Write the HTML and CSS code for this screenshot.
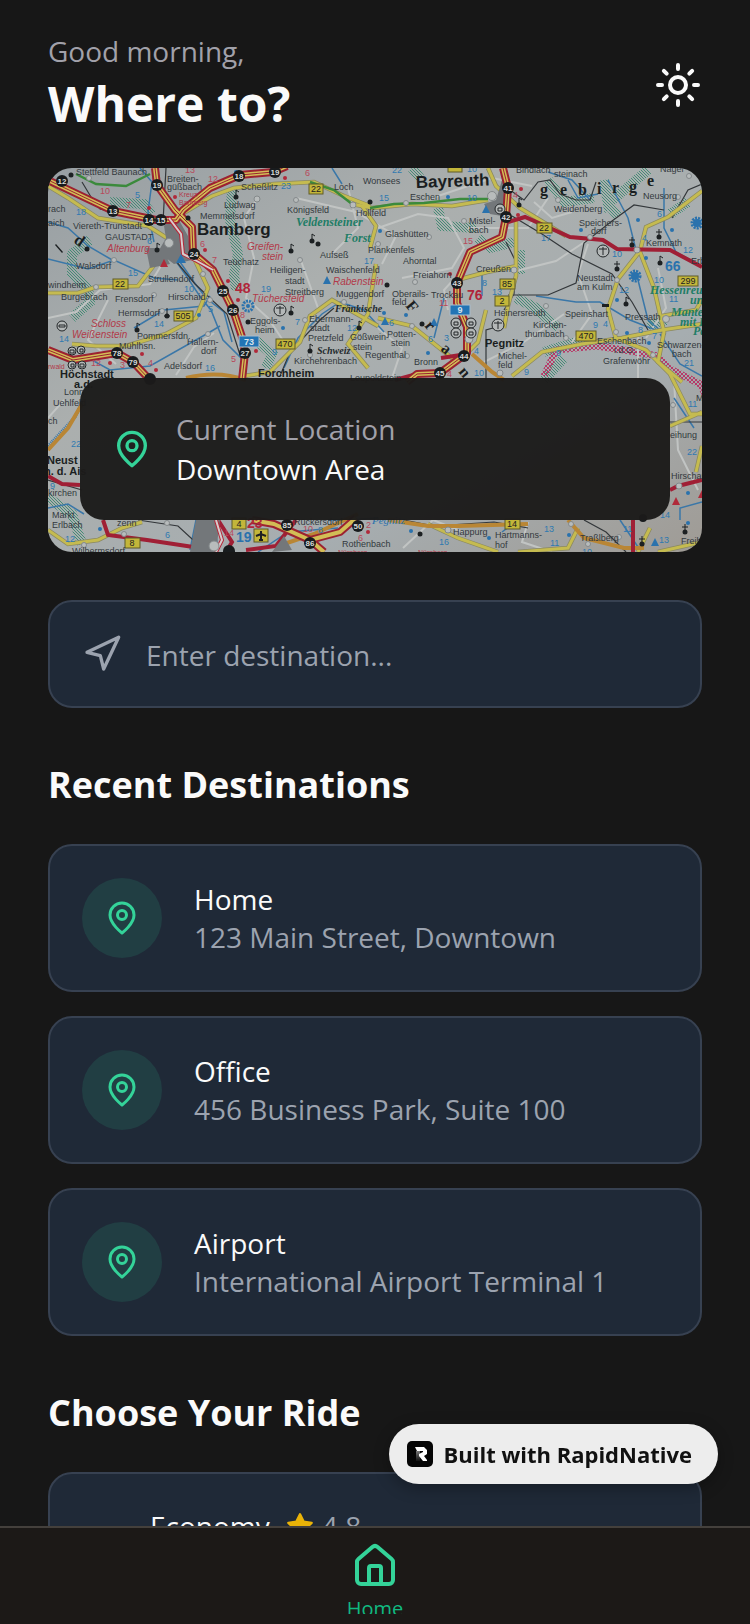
FILE: index.html
```html
<!DOCTYPE html>
<html lang="en">
<head>
    <meta charset="UTF-8">
    <meta name="viewport" content="width=device-width, initial-scale=1.0">
    <title>Where to?</title>
    <link rel="stylesheet" href="styles.css">
</head>
<body>
    <!-- shared icons -->
    <svg class="sprite" aria-hidden="true">
        <symbol id="pin" viewBox="0 0 24 24">
            <path d="M20 10c0 6-8 12-8 12s-8-6-8-12a8 8 0 0 1 16 0Z"/>
            <circle cx="12" cy="10" r="3"/>
        </symbol>
    </svg>

    <main class="screen">
        <header class="header">
            <div>
                <p class="greeting">Good morning,</p>
                <h1>Where to?</h1>
            </div>
            <button class="theme-btn" type="button" aria-label="Toggle theme">
                <svg class="icon icon-lg" viewBox="0 0 24 24">
                    <circle cx="12" cy="12" r="4"/>
                    <path d="M12 2v2M12 20v2M4.93 4.93l1.41 1.41M17.66 17.66l1.41 1.41M2 12h2M20 12h2M6.34 17.66l-1.41 1.41M19.07 4.93l-1.41 1.41"/>
                </svg>
            </button>
        </header>

        <section class="map">
            <svg class="map-art" viewBox="0 0 654 384" preserveAspectRatio="xMidYMid slice" aria-hidden="true">
                <defs>
                    <linearGradient id="paper" x1="0" y1="0" x2="1" y2="1">
                        <stop offset="0" stop-color="#989fa3"/>
                        <stop offset="0.35" stop-color="#abafae"/>
                        <stop offset="0.7" stop-color="#a6adb0"/>
                        <stop offset="1" stop-color="#9f9b95"/>
                    </linearGradient>
                    <pattern id="hatch" width="3" height="3" patternUnits="userSpaceOnUse">
                        <path d="M0 0l3 3" stroke="#448c75" stroke-width="1"/>
                    </pattern>
                    <pattern id="dots" width="4" height="4" patternUnits="userSpaceOnUse">
                        <path d="M0 0l4 4M4 0l-4 4" stroke="#b63a68" stroke-width="1"/>
                    </pattern>
                </defs>
                <rect width="654" height="384" fill="url(#paper)"/>

                <!-- forest edges -->
                <g fill="none" stroke="url(#hatch)" stroke-width="10">
                    <path d="M62 34l34 2 8 10"/>
                    <path d="M184 22l-2 30 8 34-4 20 2 16"/>
                    <path d="M42 72l-18 14v20l16 14 2 14-18 16"/>
                    <path d="M208 172l16 14-6 14"/>
                    <path d="M364 0l8 10M390 40l4 18 34 2"/>
                    <path d="M430 70l12 10 24-6M472 82v24"/>
                    <path d="M468 130l20 10 22 20"/>
                    <path d="M500 12l16 22 30-4M556 12l4 24 40-34M560 36l10 12"/>
                    <path d="M496 184l50-16M640 34l-18 12M600 158l18-6"/>
                    <path d="M516 190l-20 22"/>
                    <path d="M0 330l24 16 10 30"/>
                </g>
                <g fill="none" stroke="url(#dots)" stroke-width="7">
                    <path d="M496 208l12-26 40-4 28 4 34 6 10 12 32 16 6 12"/>
                </g>

                <!-- lanes -->
                <g fill="none" stroke="#c1c4c3" stroke-width="2">
                    <path d="M0 150l28-6 24-22 50-6 18-30"/>
                    <path d="M210 30l-14 20 10 40-8 40 22 20 20 30"/>
                    <path d="M248 30l60 14 40 24-14 28M252 90l18 50-14 24"/>
                    <path d="M330 60l40-14 30 4 16 30-12 20-50 10M416 100l-20 22 4 20"/>
                    <path d="M468 103l40-10 30-20M486 34l18 16 20-6M540 76l-10 30 14 40-20 28"/>
                    <path d="M420 60l60 0 20-30M384 30l60-20 40 8"/>
                    <path d="M166 165l-20 14-18 28M60 132l-20 40 28 24"/>
                    <path d="M626 212l4 70 20 40M610 100l8 40-20 30"/>
                    <path d="M355 380l30-28 30 12M480 354l-6 20 30 10"/>
                    <path d="M516 146l-40 28-40 20M590 212l0-44M16 232l-16 18"/>
                    <path d="M330 160l24 20-10 30M300 20l10 40-30 30"/>
                </g>

                <!-- rivers -->
                <g fill="none" stroke="#3a77a8" stroke-width="1.5">
                    <path d="M0 91l40 10 26-9 40 18 24 2M0 54l20 6 20 18 26 15"/>
                    <path d="M127 92l10 14 16 24 10 12 12 30 18 18 6 20"/>
                    <path d="M132 94l14 20 12 16 18 14 8 30"/>
                    <path d="M24 196l20-4 18 10 40-4 60-34 10-6M86 160l30-18 40-4 6-10"/>
                    <path d="M236 200l14-30 24-24 18-12 24 8 20 22"/>
                    <path d="M92 0l12 14-4 30 6 30"/>
                    <path d="M500 4l24 8 18 20M520 12l10 18 20-4M560 12l20 38 8 32"/>
                    <path d="M488 128l40 6 24 0 30 18 36 14M590 112l10 40 14 12"/>
                    <path d="M616 20v40l12 24 22 12M654 208l-22-12-20-30"/>
                    <path d="M0 278l28-30 6-16" stroke-dasharray="1 1" stroke-width="3"/>
                    <path d="M396 130l-10 40M434 104v24M284 0l10 16"/>
                    <path d="M0 340l20-4 16 10M148 352l-6 30M166 352l4 30"/>
                    <path d="M300 352l30-2M470 352l-16 12M632 352v-12l22-6M626 230l12 18 8 12"/>
                    <path d="M210 384l30-20 50-4M280 352l20 0M572 352l20 30"/>
                </g>

                <!-- rail lines -->
                <g fill="none" stroke="#33373a" stroke-width="1.2">
                    <path d="M34 14l12 20 6 7 50 12M118 0l-3 54M127 92l20 24 32 30 14 44"/>
                    <path d="M462 22l14 10 14-18 12-2 10 14 16 6 14 0 6-18"/>
                    <path d="M464 48l30 18 30 20 40 20 20 28 16 28M460 127l40 0 28-12 8-40 28-22 22-16 30 5"/>
                    <path d="M458 74l10 20-2 32-10 16M438 212v-50l14-4M624 50l16-28 14-6"/>
                    <path d="M232 208l10-24 30-32 14-12"/>
                    <path d="M356 352l30 6 60-4 34 6M536 352l22 12 20 20M90 352l40 6 26 24"/>
                    <path d="M622 254l32 0M0 312l34 10"/>
                </g>

                <!-- main roads -->
                <g fill="none" stroke="#8b8960" stroke-width="4.5">
                    <path d="M0 18l20 12 30 20 50 8 22 14 5 20"/>
                    <path d="M0 125l30 0 18-6 42-1 20-26 20-8"/>
                    <path d="M24 176l24 2 30 0 40-12 30-16 12-30-14-30"/>
                    <path d="M134 46l30-18 22-8 40-4 40-2 30 14 26 10"/>
                    <path d="M304 36l20 4 40-4 40 2 36-6M440 0l8 18 24 22 46 28"/>
                    <path d="M468 52l0 56-8 30-4 22M409 112l30-8 30-6"/>
                    <path d="M322 80l6-22-14-20M328 96l-8 50-20 30 20 24"/>
                    <path d="M196 208l26-4 30-30 10-26 22-16 46 26"/>
                    <path d="M330 150l34 8 20 16 20 16 14-4 12-12 8-32"/>
                    <path d="M464 208l30-24 40-8 40-6 40-8 40-6"/>
                    <path d="M568 171l-8-30 10-30 22-28 6-24 22-10 34-26"/>
                    <path d="M592 84l14 36 10 44-6 30 24 20M614 148l34-6 6-10"/>
                    <path d="M568 170l30 12 24 24 20 40 12 0M622 258l32-14"/>
                    <path d="M0 362l20 14 30-4 24-12 20-6M158 384l4-30M380 356l30 14 40 14"/>
                    <path d="M470 384l50-4 10-20M590 384l12-24M610 384l44-10"/>
                    <path d="M648 304l6-26"/>
                </g>
                <g fill="none" stroke="#c5bb50" stroke-width="3">
                    <path d="M0 18l20 12 30 20 50 8 22 14 5 20"/>
                    <path d="M0 125l30 0 18-6 42-1 20-26 20-8"/>
                    <path d="M24 176l24 2 30 0 40-12 30-16 12-30-14-30"/>
                    <path d="M134 46l30-18 22-8 40-4 40-2 30 14 26 10"/>
                    <path d="M304 36l20 4 40-4 40 2 36-6M440 0l8 18 24 22 46 28"/>
                    <path d="M468 52l0 56-8 30-4 22M409 112l30-8 30-6"/>
                    <path d="M322 80l6-22-14-20M328 96l-8 50-20 30 20 24"/>
                    <path d="M196 208l26-4 30-30 10-26 22-16 46 26"/>
                    <path d="M330 150l34 8 20 16 20 16 14-4 12-12 8-32"/>
                    <path d="M464 208l30-24 40-8 40-6 40-8 40-6"/>
                    <path d="M568 171l-8-30 10-30 22-28 6-24 22-10 34-26"/>
                    <path d="M592 84l14 36 10 44-6 30 24 20M614 148l34-6 6-10"/>
                    <path d="M568 170l30 12 24 24 20 40 12 0M622 258l32-14"/>
                    <path d="M0 362l20 14 30-4 24-12 20-6M158 384l4-30M380 356l30 14 40 14"/>
                    <path d="M470 384l50-4 10-20M590 384l12-24M610 384l44-10"/>
                    <path d="M648 304l6-26"/>
                </g>
                <g fill="none" stroke="#b98635" stroke-width="4">
                    <path d="M424 186l20 18 12 8M0 282l20-22 14-24M138 210q32-8 60 2"/>
                    <path d="M340 352l40 6 30 0 70-2M520 352l16 18 40 10 20 0M236 376l30-10 44-20"/>
                </g>

                <!-- green scenic roads -->
                <g fill="none" stroke="#3b8a3c" stroke-width="2.5">
                    <path d="M28 6l20 10 30 2 24-12M262 14l24 8 18 14M322 40l24-4 30-1 36-4 28 0"/>
                </g>

                <!-- federal roads -->
                <g fill="none" stroke="#a01f35" stroke-width="4">
                    <path d="M460 54l17-5 45 20 33 3 14 9 53 1 32 17"/>
                    <path d="M419 186l-26 4M369 206l-22 6M55 352l5 15 39 5 53 8M170 352l14 22-6 10"/>
                    <path d="M0 308l14 8 18 1M622 322l8-4 24-6M585 352l0 32M248 352l-20 26-30 4"/>
                    <path d="M107 92l24-6"/>
                </g>
                <g fill="#73777a">
                    <path d="M120 50l12 4 8 14 4 24-18 4-16-12 8-14-2-12zM98 80h16l8 16-20 4z"/>
                    <path d="M454 12l-6 20-12 4 6 10 12 2 8-16zM148 352h24l-4 32h-26zM236 368l8 14-20 2z"/>
                </g>

                <!-- motorways: casing, body, centre line -->
                <g fill="none" stroke-linejoin="round">
                    <g stroke="#9c2230" stroke-width="8">
                        <path d="M0 12l65 31 43 9h20l7-10 27-22 30-13 33-3 14-6"/>
                        <path d="M107 0l2 17 18 25 17 17 1 26 20 17 10 20 10 20 10 30 2 13-3 27"/>
                        <path d="M455 0l5 20-2 29-4 20-32 15-13 31v20l10 24v26l-27 20-23 1-10 8"/>
                        <path d="M0 182l25 10 44-7 16 9 17 18"/>
                        <path d="M204 352l22 4 36 16 14 12M262 372l30-8 16-14"/>
                    </g>
                    <g stroke="#d2bd56" stroke-width="4">
                        <path d="M0 12l65 31 43 9h20l7-10 27-22 30-13 33-3 14-6"/>
                        <path d="M107 0l2 17 18 25 17 17 1 26 20 17 10 20 10 20 10 30 2 13-3 27"/>
                        <path d="M455 0l5 20-2 29-4 20-32 15-13 31v20l10 24v26l-27 20-23 1-10 8"/>
                        <path d="M0 182l25 10 44-7 16 9 17 18"/>
                        <path d="M204 352l22 4 36 16 14 12M262 372l30-8 16-14"/>
                    </g>
                    <g stroke="#9c2230" stroke-width="1">
                        <path d="M0 12l65 31 43 9h20l7-10 27-22 30-13 33-3 14-6"/>
                        <path d="M107 0l2 17 18 25 17 17 1 26 20 17 10 20 10 20 10 30 2 13-3 27"/>
                        <path d="M455 0l5 20-2 29-4 20-32 15-13 31v20l10 24v26l-27 20-23 1-10 8"/>
                        <path d="M0 182l25 10 44-7 16 9 17 18"/>
                    </g>
                    <path d="M121 50l12 16 2 20 12 6 18 10M168 352l6 20-6 12" stroke="#b52a3a" stroke-width="4"/>
                    <path d="M121 50l12 16 2 20 12 6 18 10M168 352l6 20-6 12" stroke="#d6cdce" stroke-width="2"/>
                </g>

                <!-- towns -->
                <g fill="#b8bcbc" stroke="#84898b" stroke-width="1">
                    <circle cx="121" cy="75" r="4.5"/><circle cx="444" cy="28" r="4.5"/><circle cx="421" cy="171" r="4"/>
                    <circle cx="41" cy="10" r="2.5"/><circle cx="66" cy="92" r="2.5"/><circle cx="48" cy="119" r="2.5"/>
                    <circle cx="106" cy="127" r="2.5"/><circle cx="155" cy="106" r="2.5"/><circle cx="162" cy="132" r="2.5"/>
                    <circle cx="209" cy="31" r="3"/><circle cx="248" cy="32" r="2.5"/><circle cx="305" cy="37" r="3"/>
                    <circle cx="252" cy="92" r="2.5"/><circle cx="160" cy="166" r="2.5"/><circle cx="114" cy="143" r="2.5"/>
                    <circle cx="358" cy="35" r="2.5"/><circle cx="416" cy="53" r="2.5"/><circle cx="381" cy="69" r="2.5"/>
                    <circle cx="367" cy="114" r="2.5"/><circle cx="466" cy="102" r="3"/><circle cx="498" cy="138" r="2.5"/>
                    <circle cx="589" cy="82" r="3"/><circle cx="542" cy="69" r="2.5"/><circle cx="569" cy="112" r="2.5"/>
                    <circle cx="568" cy="164" r="2.5"/><circle cx="518" cy="170" r="2.5"/><circle cx="618" cy="151" r="3.5"/>
                    <circle cx="630" cy="29" r="2.5"/><circle cx="641" cy="8" r="2.5"/><circle cx="605" cy="187" r="2.5"/>
                    <circle cx="364" cy="158" r="2.5"/><circle cx="296" cy="134" r="2.5"/><circle cx="257" cy="152" r="2.5"/>
                    <circle cx="359" cy="188" r="2.5"/><circle cx="452" cy="205" r="3"/><circle cx="510" cy="32" r="2.5"/>
                    <circle cx="400" cy="362" r="3"/><circle cx="166" cy="378" r="5"/><circle cx="36" cy="377" r="2.5"/>
                    <circle cx="76" cy="366" r="2.5"/><circle cx="523" cy="356" r="2.5"/><circle cx="625" cy="237" r="2.5"/>
                    <circle cx="631" cy="318" r="3"/><circle cx="262" cy="187" r="2.5"/><circle cx="330" cy="76" r="2.5"/>
                    <circle cx="119" cy="355" r="2.5"/><circle cx="540" cy="376" r="2.5"/><circle cx="571" cy="369" r="2.5"/>
                </g>
                <g fill="#1c2022">
                    <circle cx="23" cy="7" r="2.5"/><circle cx="39" cy="81" r="2.5"/><circle cx="109" cy="82" r="2.5"/>
                    <circle cx="140" cy="50" r="2.5"/><circle cx="188" cy="29" r="2.5"/><circle cx="264" cy="73" r="2.5"/>
                    <circle cx="270" cy="76" r="2.5"/><circle cx="243" cy="83" r="2.5"/><circle cx="322" cy="34" r="2.5"/>
                    <circle cx="119" cy="148" r="2.5"/><circle cx="89" cy="162" r="2.5"/><circle cx="243" cy="145" r="2.5"/>
                    <circle cx="200" cy="154" r="2.5"/><circle cx="262" cy="183" r="2.5"/><circle cx="311" cy="160" r="2.5"/>
                    <circle cx="471" cy="37" r="2.5"/><circle cx="339" cy="117" r="2.5"/><circle cx="569" cy="101" r="2.5"/>
                    <circle cx="584" cy="77" r="2.5"/><circle cx="611" cy="69" r="2.5"/><circle cx="612" cy="95" r="2.5"/>
                    <circle cx="578" cy="136" r="2.5"/><circle cx="372" cy="366" r="2.5"/><circle cx="594" cy="376" r="2.5"/>
                    <circle cx="637" cy="364" r="2.5"/><circle cx="374" cy="156" r="2.5"/>
                    <path d="M554 136h7v3h-7zM8 76l7 8-1 1-7-8z"/>
                    <path d="M119 148v-8M109 82v-7l3 2M264 73v-7l3 2M243 83v-7l3 2M188 29v-7l3 2M243 145v-7l3 2M262 183v-7l3 2M311 160v-7l3 2M471 37v-7l3 2M569 101v-8M584 77v-8M611 69v-8M612 95v-7l3 2M578 136v-7l3 2M594 376v-8M637 364v-8M89 162v-7l3 2" stroke="#1c2022" fill="none"/>
                    <path d="M116 148h6M566 96h6M581 72h6M608 64h6M591 371h6M634 359h6" stroke="#1c2022"/>
                </g>
                <g fill="#2a72ad">
                    <path d="M128 95l5-9 5 9zM275 116l4-8 4 8zM434 45l4-8 4 8zM333 157l4-8 4 8zM382 158l4-8 4 8zM603 378l4-8 4 8z"/>
                    <circle cx="188" cy="4" r="2"/><circle cx="332" cy="63" r="2"/><circle cx="400" cy="29" r="2"/>
                    <circle cx="151" cy="147" r="2"/><circle cx="235" cy="160" r="2"/><circle cx="590" cy="52" r="2"/>
                    <circle cx="533" cy="62" r="2"/><circle cx="624" cy="62" r="2"/><circle cx="598" cy="90" r="2"/>
                    <circle cx="569" cy="132" r="2"/><circle cx="336" cy="145" r="2"/><circle cx="358" cy="147" r="2"/>
                    <circle cx="601" cy="175" r="2"/><circle cx="579" cy="165" r="2"/><circle cx="380" cy="185" r="2"/>
                    <circle cx="640" cy="325" r="2"/><circle cx="52" cy="361" r="2"/><circle cx="363" cy="363" r="2"/>
                    <circle cx="441" cy="370" r="2"/><circle cx="521" cy="367" r="2"/><circle cx="640" cy="355" r="2"/>
                    <circle cx="200" cy="138" r="2"/><circle cx="587" cy="108" r="4"/><circle cx="649" cy="55" r="4"/>
                </g>
                <g fill="none" stroke="#2a72ad" stroke-width="3" stroke-dasharray="2 1">
                    <circle cx="200" cy="138" r="5"/><circle cx="587" cy="108" r="5"/><circle cx="649" cy="55" r="5"/>
                </g>
                <g fill="#b02a3a">
                    <path d="M112 99l4-8 4 8zM624 337l4-8 4 8zM650 330l4-8v8z"/>
                    <circle cx="127" cy="29" r="2"/><circle cx="101" cy="40" r="2"/><circle cx="157" cy="82" r="2"/>
                    <circle cx="180" cy="113" r="2"/><circle cx="190" cy="132" r="2"/><circle cx="237" cy="10" r="2"/>
                    <circle cx="62" cy="195" r="2"/><circle cx="94" cy="186" r="2"/><circle cx="108" cy="202" r="2"/>
                    <circle cx="402" cy="106" r="2"/><circle cx="473" cy="21" r="2"/><circle cx="470" cy="47" r="2"/>
                    <circle cx="208" cy="183" r="2"/><circle cx="320" cy="364" r="2"/>
                </g>

                <!-- service symbols -->
                <g fill="#b4b8b8" stroke="#222628" stroke-width="1">
                    <circle cx="232" cy="142" r="6"/><circle cx="555" cy="83" r="6"/><circle cx="450" cy="157" r="6"/>
                    <circle cx="408" cy="155" r="5"/><circle cx="423" cy="155" r="5"/><circle cx="408" cy="165" r="5"/>
                    <circle cx="423" cy="165" r="5"/><circle cx="452" cy="41" r="5"/><circle cx="14" cy="158" r="5"/>
                    <circle cx="24" cy="183" r="4"/><circle cx="33" cy="182" r="4"/><circle cx="24" cy="197" r="4"/><circle cx="34" cy="197" r="4"/>
                    <path d="M228 140h8M232 138v8M551 81h8M555 79v8M446 155h8M450 153v8M406 154h4v3h-4zM421 154h4v3h-4zM406 164h4v3h-4zM421 164h4v3h-4zM450 40h4v3h-4zM11 157h6v2h-6zM22 182h4v3h-4zM32 181h3v3h-3zM23 196h3v3h-3zM32 196h4v3h-4z"/>
                </g>

                <!-- junction numbers -->
                <g fill="#181b1d">
                    <circle cx="14" cy="13" r="6"/><circle cx="65" cy="43" r="6"/><circle cx="101" cy="52" r="6"/>
                    <circle cx="113" cy="52" r="6"/><circle cx="109" cy="17" r="6"/><circle cx="191" cy="8" r="6"/>
                    <circle cx="227" cy="4" r="6"/><circle cx="146" cy="86" r="6"/><circle cx="175" cy="123" r="6"/>
                    <circle cx="185" cy="142" r="6"/><circle cx="197" cy="185" r="6"/><circle cx="69" cy="185" r="6"/>
                    <circle cx="85" cy="194" r="6"/><circle cx="102" cy="211" r="6"/><circle cx="460" cy="20" r="6"/>
                    <circle cx="458" cy="49" r="6"/><circle cx="409" cy="115" r="6"/><circle cx="416" cy="188" r="6"/>
                    <circle cx="392" cy="205" r="6"/><circle cx="239" cy="357" r="6"/><circle cx="262" cy="375" r="6"/>
                    <circle cx="310" cy="358" r="6"/><circle cx="181" cy="383" r="6"/><circle cx="595" cy="350" r="4"/>
                </g>
                <g class="junction">
                    <text x="14" y="16">12</text><text x="65" y="46">13</text><text x="101" y="55">14</text>
                    <text x="113" y="55">15</text><text x="109" y="20">19</text><text x="191" y="11">18</text>
                    <text x="227" y="7">19</text><text x="146" y="89">24</text><text x="175" y="126">25</text>
                    <text x="185" y="145">26</text><text x="197" y="188">27</text><text x="69" y="188">78</text>
                    <text x="85" y="197">79</text><text x="460" y="23">41</text><text x="458" y="52">42</text>
                    <text x="409" y="118">43</text><text x="416" y="191">44</text><text x="392" y="208">45</text>
                    <text x="239" y="360">85</text><text x="262" y="378">86</text><text x="310" y="361">50</text>
                </g>

                <!-- road number plates -->
                <g fill="#c3b63a" stroke="#5f5b28" stroke-width="1">
                    <rect x="261" y="16" width="14" height="10"/><rect x="65" y="111" width="15" height="10"/>
                    <rect x="126" y="143" width="19" height="10"/><rect x="228" y="171" width="19" height="10"/>
                    <rect x="489" y="55" width="15" height="10"/><rect x="452" y="111" width="15" height="10"/>
                    <rect x="447" y="128" width="14" height="10"/><rect x="528" y="163" width="20" height="10"/>
                    <rect x="630" y="108" width="20" height="10"/><rect x="400" y="-6" width="14" height="10"/>
                    <rect x="77" y="370" width="15" height="10"/><rect x="184" y="350" width="14" height="11"/>
                    <rect x="457" y="351" width="15" height="10"/><rect x="206" y="361" width="14" height="13"/>
                </g>
                <path d="M213 363v9M208 368l5-2 5 2M211 372h4" stroke="#1d2021" stroke-width="2" fill="none"/>
                <g class="plate">
                    <text x="268" y="24">22</text><text x="72" y="119">22</text><text x="135" y="151">505</text>
                    <text x="237" y="179">470</text><text x="496" y="63">22</text><text x="459" y="119">85</text>
                    <text x="454" y="136">2</text><text x="538" y="171">470</text><text x="640" y="116">299</text>
                    <text x="84" y="378">8</text><text x="191" y="359">4</text><text x="464" y="359">14</text>
                </g>
                <g fill="#2274b5" stroke="#a9bccb" stroke-width="1">
                    <rect x="191" y="168" width="20" height="11"/><rect x="402" y="137" width="20" height="10"/>
                </g>
                <g class="plate plate-blue">
                    <text x="201" y="177">73</text><text x="412" y="145">9</text>
                </g>

                <!-- place names -->
                <g class="city">
                    <text x="149" y="67">Bamberg</text>
                    <text x="368" y="20" transform="rotate(-2 368 20)">Bayreuth</text>
                </g>
                <g class="town">
                    <text x="12" y="210">Höchstadt</text><text x="26" y="220">a.d.</text>
                    <text x="210" y="209">Forchheim</text><text x="437" y="179">Pegnitz</text>
                    <text x="-1" y="296">Neust</text><text x="-4" y="307">n. d. Ais</text>
                </g>
                <g class="village">
                    <text x="28" y="7">Stettfeld Baunach</text><text x="119" y="14">Breiten-</text><text x="119" y="22">güßbach</text>
                    <text x="193" y="22">Scheßlitz</text><text x="176" y="40">Ludwag</text><text x="152" y="51">Memmelsdorf</text>
                    <text x="239" y="45">Königsfeld</text><text x="286" y="22">Loch</text><text x="308" y="48">Hollfeld</text>
                    <text x="315" y="16">Wonsees</text><text x="25" y="61">Viereth-Trunstadt</text><text x="57" y="72">GAUSTADT</text>
                    <text x="0" y="44">rach</text><text x="0" y="58">aich</text><text x="28" y="101">Walsdorf</text>
                    <text x="0" y="120">windheim</text><text x="13" y="132">Burgebrach</text><text x="67" y="134">Frensdorf</text>
                    <text x="100" y="114">Strullendorf</text><text x="120" y="132">Hirschaid</text><text x="70" y="148">Hermsdorf</text>
                    <text x="89" y="171">Pommersfdn.</text><text x="71" y="181">Mühlhsn.</text><text x="139" y="177">Hallern-</text>
                    <text x="153" y="186">dorf</text><text x="116" y="201">Adelsdorf</text><text x="175" y="97">Teüchatz</text>
                    <text x="222" y="105">Heiligen-</text><text x="237" y="116">stadt</text><text x="237" y="127">Streitberg</text>
                    <text x="272" y="90">Aufseß</text><text x="278" y="105">Waischenfeld</text><text x="288" y="129">Muggendorf</text>
                    <text x="202" y="156">Eggols-</text><text x="207" y="165">heim</text><text x="261" y="154">Ebermann-</text>
                    <text x="262" y="163">stadt</text><text x="260" y="173">Pretzfeld</text><text x="246" y="196">Kirchehrenbach</text>
                    <text x="302" y="172">Gößwein-</text><text x="305" y="182">stein</text><text x="317" y="190">Regenthal</text>
                    <text x="302" y="213">Leupoldstein</text><text x="362" y="32">Eschen</text><text x="421" y="56">Mistel-</text>
                    <text x="421" y="65">bach</text><text x="337" y="69">Glashütten</text><text x="320" y="85">Plankenfels</text>
                    <text x="355" y="96">Ahorntal</text><text x="365" y="110">Freiahorn</text><text x="428" y="104">Creußen</text>
                    <text x="344" y="129">Oberails-</text><text x="344" y="137">feld</text><text x="383" y="130">Trockau</text>
                    <text x="339" y="169">Potten-</text><text x="343" y="178">stein</text><text x="366" y="197">Bronn</text>
                    <text x="446" y="148">Heinersreuth</text><text x="485" y="160">Kirchen-</text><text x="477" y="169">thumbach</text>
                    <text x="450" y="191">Michel-</text><text x="450" y="200">feld</text><text x="468" y="5">Bindlach</text>
                    <text x="506" y="9">steinach</text><text x="506" y="0">Warmen-</text><text x="506" y="44">Weidenberg</text>
                    <text x="531" y="58">Speichers-</text><text x="543" y="66">dorf</text><text x="595" y="31">Neusorg</text>
                    <text x="612" y="4">Nagel</text><text x="598" y="78">Kemnath</text><text x="529" y="113">Neustadt</text>
                    <text x="529" y="122">am Kulm</text><text x="517" y="149">Speinshart</text><text x="577" y="152">Pressath</text>
                    <text x="549" y="176">Eschenbach</text><text x="566" y="185">i.d.O.</text><text x="555" y="196">Grafenwöhr</text>
                    <text x="609" y="180">Schwarzen-</text><text x="624" y="189">bach</text><text x="643" y="96">Erb</text>
                    <text x="16" y="227">Lonn</text><text x="5" y="238">Uehlfeld</text><text x="0" y="256">ch</text>
                    <text x="0" y="328">kirchen</text><text x="4" y="350">Markt</text><text x="4" y="360">Erlbach</text>
                    <text x="69" y="358">zenn</text><text x="246" y="357">Rückersdorf</text><text x="294" y="379">Rothenbach</text>
                    <text x="24" y="386">Wilhermsdorf</text><text x="405" y="367">Happurg</text><text x="447" y="370">Hartmanns-</text>
                    <text x="447" y="380">hof</text><text x="532" y="373">Traßlberg</text><text x="622" y="270">eihung</text>
                    <text x="623" y="311">Hirschau</text><text x="633" y="376">Freih</text><text x="648" y="233">M</text>
                </g>
                <g class="sight">
                    <text x="59" y="84">Altenburg</text><text x="199" y="82">Greifen-</text><text x="214" y="92">stein</text>
                    <text x="204" y="134">Tüchersfeld</text><text x="285" y="117">Rabenstein</text><text x="43" y="159">Schloss</text>
                    <text x="24" y="170">Weißenstein</text>
                </g>
                <g class="tiny-red">
                    <text x="131" y="29">Kreuz</text><text x="131" y="37">Bamberg</text><text x="0" y="201">rwald</text>
                    <text x="290" y="387">Nürnberg</text><text x="370" y="387">Nürnberg</text>
                </g>
                <g class="region">
                    <text x="248" y="58">Veldensteiner</text><text x="296" y="74">Forst</text>
                    <text x="602" y="126">Hessenreuther</text><text x="642" y="136">und</text><text x="623" y="148">Manteler</text>
                    <text x="632" y="158">mit K</text><text x="645" y="167">Park</text>
                </g>
                <g class="region region-dark">
                    <text x="287" y="144">Fränkische</text><text x="269" y="186">Schweiz</text>
                </g>
                <text class="river" x="324" y="356">Pegnitz</text>
                <g class="range">
                    <text x="492" y="27">g</text><text x="512" y="27">e</text><text x="530" y="27">b</text><text x="549" y="26">i</text>
                    <text x="564" y="25">r</text><text x="581" y="24">g</text><text x="599" y="18">e</text>
                    <text x="25" y="74" transform="rotate(35 25 74)">d</text><text x="357" y="138" transform="rotate(50 357 138)">F</text>
                    <text x="376" y="158" transform="rotate(50 376 158)">r</text><text x="392" y="182" transform="rotate(40 392 182)">a</text>
                    <text x="410" y="204" transform="rotate(50 410 204)">n</text>
                </g>

                <!-- distances -->
                <g class="km">
                    <text x="87" y="30">5</text><text x="28" y="47">18</text><text x="233" y="21">23</text><text x="80" y="108">15</text>
                    <text x="99" y="76">6</text><text x="136" y="124">10</text><text x="213" y="124">19</text><text x="160" y="144">5</text>
                    <text x="106" y="159">14</text><text x="11" y="174">14</text><text x="157" y="203">16</text><text x="247" y="157">7</text>
                    <text x="224" y="187">9</text><text x="316" y="96">17</text><text x="299" y="163">12</text><text x="331" y="33">15</text>
                    <text x="419" y="33">10</text><text x="344" y="5">22</text><text x="419" y="4">10</text><text x="493" y="73">17</text>
                    <text x="434" y="118">8</text><text x="444" y="127">13</text><text x="341" y="158">6</text><text x="380" y="174">6</text>
                    <text x="396" y="173">3</text><text x="426" y="186">4</text><text x="426" y="208">10</text><text x="476" y="207">9</text>
                    <text x="508" y="188">9</text><text x="545" y="160">9</text><text x="555" y="159">4</text><text x="564" y="89">10</text>
                    <text x="571" y="125">12</text><text x="606" y="115">10</text><text x="609" y="49">6</text><text x="594" y="73">4</text>
                    <text x="635" y="85">12</text><text x="621" y="134">11</text><text x="590" y="165">8</text><text x="604" y="171">7</text>
                    <text x="636" y="198">21</text><text x="23" y="279">22</text><text x="2" y="321">9</text><text x="17" y="374">12</text>
                    <text x="117" y="370">6</text><text x="391" y="377">16</text><text x="496" y="364">13</text><text x="502" y="378">11</text>
                    <text x="575" y="364">11</text><text x="612" y="350">14</text><text x="611" y="375">13</text><text x="639" y="287">22</text>
                    <text x="640" y="239">11</text><text x="534" y="387">10</text><text x="270" y="365">8</text>
                </g>
                <g class="km km-red">
                    <text x="52" y="26">10</text><text x="78" y="40">7</text><text x="137" y="5">13</text><text x="160" y="14">12</text>
                    <text x="257" y="8">6</text><text x="152" y="79">6</text><text x="164" y="95">7</text><text x="192" y="150">8</text>
                    <text x="43" y="198">12</text><text x="72" y="200">3</text><text x="100" y="198">4</text><text x="183" y="194">5</text>
                    <text x="415" y="76">15</text><text x="391" y="138">11</text><text x="399" y="209">4</text><text x="176" y="368">14</text>
                    <text x="255" y="364">10</text><text x="318" y="360">2</text><text x="310" y="373">6</text><text x="465" y="30">4</text>
                </g>
                <g class="sheet">
                    <text x="187" y="125">48</text><text x="419" y="132">76</text><text x="199" y="360">23</text>
                </g>
                <g class="sheet sheet-blue">
                    <text x="617" y="103">66</text><text x="188" y="374">19</text>
                </g>
            </svg>

            <div class="location">
                <svg class="icon icon-md green"><use href="#pin"/></svg>
                <div class="location-text">
                    <p class="soft">Current Location</p>
                    <p>Downtown Area</p>
                </div>
            </div>
        </section>

        <label class="search">
            <svg class="icon icon-md muted" viewBox="0 0 24 24" aria-hidden="true">
                <path d="M3 11L22 2l-9 19-2-8-8-2Z"/>
            </svg>
            <input type="text" aria-label="Destination" placeholder="Enter destination...">
        </label>

        <section class="block">
            <h2>Recent Destinations</h2>
            <button class="place" type="button">
                <span class="badge"><svg class="icon icon-sm green"><use href="#pin"/></svg></span>
                <span class="place-text">
                    <span>Home</span>
                    <span class="muted">123 Main Street, Downtown</span>
                </span>
            </button>
            <button class="place" type="button">
                <span class="badge"><svg class="icon icon-sm green"><use href="#pin"/></svg></span>
                <span class="place-text">
                    <span>Office</span>
                    <span class="muted">456 Business Park, Suite 100</span>
                </span>
            </button>
            <button class="place" type="button">
                <span class="badge"><svg class="icon icon-sm green"><use href="#pin"/></svg></span>
                <span class="place-text">
                    <span>Airport</span>
                    <span class="muted">International Airport Terminal 1</span>
                </span>
            </button>
        </section>

        <section class="block">
            <h2>Choose Your Ride</h2>
            <button class="place ride" type="button">
                <span class="ride-icon"></span>
                <span class="ride-title">
                    <span>Economy</span>
                    <span class="rating">
                        <svg class="star" viewBox="0 0 24 24" aria-hidden="true">
                            <path d="M12 2l3.09 6.26L22 9.27l-5 4.87 1.18 6.88L12 17.77l-6.18 3.25L7 14.14 2 9.27l6.91-1.01L12 2Z"/>
                        </svg>
                        <span class="muted">4.8</span>
                    </span>
                </span>
            </button>
        </section>
    </main>

    <a class="built-with" href="#">
        <svg class="built-logo" viewBox="0 0 26 26" aria-hidden="true">
            <defs>
                <linearGradient id="fade" x1="0" y1="0" x2="0" y2="1">
                    <stop offset="0" stop-color="#777"/>
                    <stop offset="1" stop-color="#111"/>
                </linearGradient>
            </defs>
            <rect width="26" height="26" rx="5" fill="#050505"/>
            <path d="M9 10h4v10H9z" fill="url(#fade)"/>
            <path d="M8 6h9l3 3v4l-3 2 3 4v1h-4l-4-5v-2l4-2v-1H10z" fill="#fff"/>
        </svg>
        <span>Built with RapidNative</span>
    </a>

    <nav class="tabs">
        <a class="tab" href="#">
            <svg class="icon icon-lg" viewBox="0 0 24 24" aria-hidden="true">
                <path d="M15 21v-8a1 1 0 0 0-1-1h-4a1 1 0 0 0-1 1v8"/>
                <path d="M3 10a2 2 0 0 1 .709-1.528l7-5.999a2 2 0 0 1 2.582 0l7 5.999A2 2 0 0 1 21 10v9a2 2 0 0 1-2 2H5a2 2 0 0 1-2-2z"/>
            </svg>
            <span>Home</span>
        </a>
    </nav>
</body>
</html>
```

FILE: styles.css
```css
* {
    margin: 0;
    padding: 0;
    box-sizing: border-box;
}
body {
    background-color: #171717;
    color: #fafafa;
    font-family: "Open Sans", "Noto Sans", sans-serif;
    font-size: 28px;
    line-height: 38px;
    display: flex;
    flex-direction: column;
    height: 100vh;
}
button, input {
    font: inherit;
    color: inherit;
    background: none;
    border: none;
}
button {
    cursor: pointer;
    text-align: left;
}
a {
    text-decoration: none;
}
h1 {
    font-size: 48px;
    line-height: 68px;
}
h2 {
    font-size: 36px;
    line-height: 58px;
    margin-bottom: 6px;
}
.sprite {
    position: absolute;
    width: 0;
    height: 0;
}
.screen {
    flex: 1;
    min-height: 0;
    padding: 32px 48px 0;
    overflow-y: auto;
    scrollbar-width: none;
}

/* icons */
.icon {
    display: block;
    flex-shrink: 0;
    fill: none;
    stroke: currentColor;
    stroke-width: 2;
    stroke-linecap: round;
    stroke-linejoin: round;
}
.icon-sm {
    width: 36px;
    height: 36px;
}
.icon-md {
    width: 40px;
    height: 40px;
}
.icon-lg {
    width: 48px;
    height: 48px;
}
.green {
    color: #34d399;
}
.muted {
    color: #9ca3af;
}
.soft, .greeting {
    color: #a1a1aa;
}

.header {
    display: flex;
    justify-content: space-between;
    align-items: center;
    margin-bottom: 30px;
}

/* map */
.map {
    position: relative;
    height: 384px;
    border-radius: 24px;
    overflow: hidden;
}
.map-art {
    display: block;
    width: 100%;
    height: 100%;
}
.map-art text {
    font-family: "Liberation Sans Narrow", "Liberation Sans", sans-serif;
    font-size: 9px;
    fill: #33393d;
}
.map-art .city text {
    font-family: "Liberation Sans", sans-serif;
    font-size: 17px;
    font-weight: bold;
    fill: #1a1e21;
}
.map-art .town text {
    font-family: "Liberation Sans", sans-serif;
    font-size: 11px;
    font-weight: bold;
    fill: #1a1e21;
}
.map-art .sight text {
    font-family: "Liberation Sans", sans-serif;
    font-size: 10px;
    font-style: italic;
    fill: #b23a4a;
}
.map-art .tiny-red text {
    font-size: 7px;
    fill: #b23a4a;
}
.map-art .region text {
    font-family: "Liberation Serif", serif;
    font-size: 12px;
    font-style: italic;
    font-weight: bold;
    fill: #1f7d66;
}
.map-art .region-dark text {
    font-size: 10px;
    fill: #1f2a2c;
}
.map-art .river {
    font-family: "Liberation Serif", serif;
    font-size: 11px;
    font-style: italic;
    fill: #2a72ad;
}
.map-art .range text {
    font-family: "Liberation Serif", serif;
    font-size: 16px;
    font-weight: bold;
    fill: #1a1e21;
}
.map-art .km text {
    font-family: "Liberation Sans", sans-serif;
    fill: #2f79b0;
}
.map-art .km-red text {
    fill: #b8485a;
}
.map-art .junction text {
    font-size: 8px;
    font-weight: bold;
    text-anchor: middle;
    fill: #d5d8d8;
}
.map-art .plate text {
    font-family: "Liberation Sans", sans-serif;
    text-anchor: middle;
    fill: #1d2021;
}
.map-art .plate-blue text {
    font-weight: bold;
    fill: #d8e2ea;
}
.map-art .sheet text {
    font-family: "Liberation Sans", sans-serif;
    font-size: 14px;
    font-weight: bold;
    fill: #b0263a;
}
.map-art .sheet-blue text {
    fill: #2a72ad;
}
.location {
    position: absolute;
    left: 32px;
    right: 32px;
    bottom: 32px;
    display: flex;
    align-items: center;
    gap: 24px;
    padding: 32px;
    border-radius: 24px;
    background-color: rgba(28, 27, 26, 0.97);
}
.location-text {
    display: flex;
    flex-direction: column;
    gap: 2px;
}

.search {
    display: flex;
    align-items: center;
    gap: 24px;
    height: 108px;
    margin-top: 48px;
    padding: 0 32px;
    border: 2px solid #374151;
    border-radius: 24px;
    background-color: #1f2937;
}
.search input {
    flex: 1;
    min-width: 0;
    padding-top: 2px;
    outline: none;
}
.search input::placeholder {
    color: #9ca3af;
    opacity: 1;
}

/* destination and ride cards */
.block {
    display: flex;
    flex-direction: column;
    gap: 24px;
    margin-top: 48px;
}
.place {
    display: flex;
    align-items: center;
    gap: 32px;
    padding: 32px;
    border: 2px solid #374151;
    border-radius: 24px;
    background-color: #1f2937;
}
.badge {
    display: flex;
    align-items: center;
    justify-content: center;
    width: 80px;
    height: 80px;
    border-radius: 50%;
    background-color: rgba(52, 211, 153, 0.12);
}
.place-text {
    display: flex;
    flex-direction: column;
}
.ride {
    align-items: flex-start;
}
.ride-icon {
    width: 36px;
    height: 80px;
}
.ride-title, .rating {
    display: flex;
    align-items: center;
}
.ride-title {
    gap: 16px;
    line-height: 40px;
}
.rating {
    gap: 8px;
}
.star {
    width: 28px;
    height: 28px;
    fill: #eab308;
    stroke: #eab308;
    stroke-width: 2;
    stroke-linejoin: round;
}

.built-with {
    position: fixed;
    right: 32px;
    bottom: 140px;
    display: flex;
    align-items: center;
    gap: 10px;
    height: 60px;
    padding: 0 26px 0 18px;
    border-radius: 30px;
    background-color: #ededed;
    color: #111;
    font-size: 22px;
    font-weight: bold;
    box-shadow: 0 4px 16px rgba(0, 0, 0, 0.3);
}
.built-logo {
    width: 26px;
    height: 26px;
}

.tabs {
    display: flex;
    justify-content: center;
    height: 98px;
    padding: 14px 0 10px;
    border-top: 2px solid #44403c;
    background-color: #1c1917;
}
.tab {
    display: flex;
    flex-direction: column;
    align-items: center;
    gap: 4px;
    overflow: hidden;
    color: #34d399;
    font-size: 20px;
    line-height: 30px;
}
.tab span {
    color: #10b981;
}
```
